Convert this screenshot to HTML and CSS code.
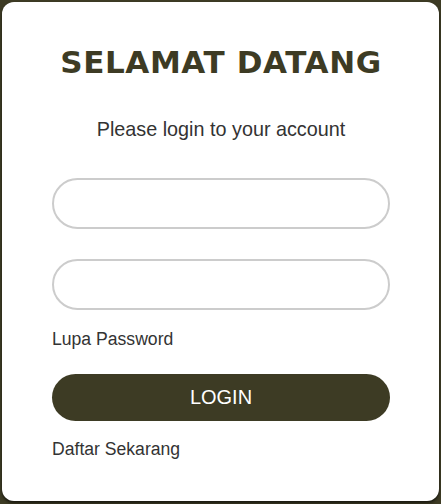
FILE: index.html
```html
<!DOCTYPE html>
<html>
<head>
<meta charset="utf-8">
<link rel="stylesheet" href="styles.css">
</head>
<body>
<div class="card">
  <h1 class="title">SELAMAT DATANG</h1>
  <p class="subtitle">Please login to your account</p>
  <form class="form">
    <input class="field" type="text">
    <input class="field" type="password">
    <a class="link forgot">Lupa Password</a>
    <button class="btn" type="button">LOGIN</button>
    <a class="link register">Daftar Sekarang</a>
  </form>
</div>
</body>
</html>
```
FILE: styles.css
```css
html, body {
  margin: 0;
  height: 100%;
}
body {
  background: #3d3b24;
  padding: 2px 2px 3px 2px;
  box-sizing: border-box;
  font-family: "Liberation Sans", Arial, sans-serif;
}
.card {
  background: #fff;
  border-radius: 12px;
  height: 100%;
  box-sizing: border-box;
  padding: 41px 49px 0 50px;
  box-shadow: 0 2px 3px rgba(0,0,0,0.6);
}
.title {
  margin: 0;
  text-align: center;
  font-family: "DejaVu Sans", Verdana, sans-serif;
  font-weight: bold;
  font-size: 31px;
  letter-spacing: 0.6px;
  color: #3d3b24;
  line-height: 38px;
}
.subtitle {
  margin: 37px 0 0 0;
  text-align: center;
  font-size: 19.8px;
  color: #333;
  line-height: 22px;
}
.form {
  display: flex;
  flex-direction: column;
  margin-top: 38px;
}
.field {
  height: 51px;
  box-sizing: border-box;
  border: 2px solid #ccc;
  border-radius: 26px;
  margin: 0 0 30px 0;
  outline: none;
  font-size: 16px;
  padding: 0 20px;
}
.field + .field {
  margin-bottom: 19px;
}
.link {
  font-size: 17.6px;
  color: #333;
  line-height: 20px;
}
.btn {
  margin-top: 25px;
  height: 47px;
  border: none;
  border-radius: 24px;
  background: #3d3b24;
  color: #fff;
  font-family: "Liberation Sans", Arial, sans-serif;
  font-size: 20px;
}
.register {
  margin-top: 18px;
}
```
